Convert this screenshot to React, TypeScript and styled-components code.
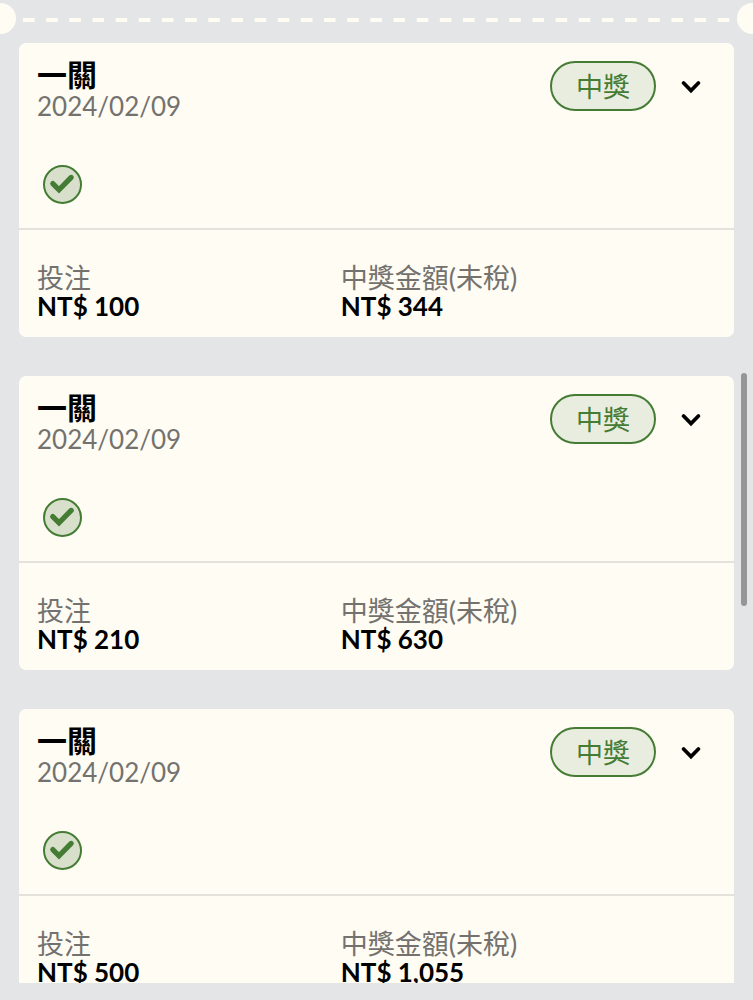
import React from 'react';
import styled, { createGlobalStyle } from 'styled-components';

const colors = {
  page: '#e3e5e7',
  paper: '#fffcf4',
  rule: '#e5e2dc',
  ink: '#000000',
  muted: '#73726e',
  green: '#457c34',
  greenTint: '#e9ede0',
  greenFill: '#d8e0cc',
};

const GlobalStyle = createGlobalStyle`
  *, *::before, *::after { box-sizing: border-box; }
  body {
    margin: 0;
    background: ${colors.page};
    color: ${colors.ink};
    font-family: Lato, "Noto Sans CJK TC", sans-serif;
    font-size: 27px;
  }
`;

const Screen = styled.main`
  position: relative;
  display: flex;
  flex-direction: column;
  height: 100vh;
  padding: 3px 0 17px;
  overflow: hidden;
`;

const Perforation = styled.div`
  display: flex;
  flex: none;
  align-items: center;
  height: 31px;
`;

const Notch = styled.span<{ $side: 'left' | 'right' }>`
  flex: none;
  width: 16px;
  height: 31px;
  background: ${colors.paper};
  border-radius: ${(p) => (p.$side === 'left' ? '0 16px 16px 0' : '16px 0 0 16px')};
`;

const Dashes = styled.span`
  flex: 1;
  height: 4px;
  margin: 3px -4px 0 7px;
  background-image: linear-gradient(to right, ${colors.paper} 52%, transparent 52%);
  background-size: 23px 4px;
  background-repeat: round no-repeat;
`;

const BetList = styled.ul`
  display: flex;
  flex: 1;
  flex-direction: column;
  gap: 39px;
  min-height: 0;
  margin: 0;
  padding: 9px 19px 0;
  overflow: hidden;
  list-style: none;
`;

const Card = styled.li`
  flex: none;
  background: ${colors.paper};
  border-radius: 7px;
`;

const CardTop = styled.div`
  padding: 16px 18px 24px;
  border-bottom: 2px solid ${colors.rule};
`;

const CardHeader = styled.header`
  display: flex;
  align-items: flex-start;
`;

const Heading = styled.div`
  flex: 1;
`;

const Title = styled.h2`
  margin: 0;
  font-size: 30px;
  font-weight: 700;
  line-height: 30px;
`;

const BetDate = styled.time`
  display: block;
  color: ${colors.muted};
  font-size: 26px;
  line-height: 34px;
`;

const StatusPill = styled.span`
  display: flex;
  align-items: center;
  justify-content: center;
  width: 106px;
  height: 50px;
  margin-top: 2px;
  padding-bottom: 2px;
  color: ${colors.green};
  background: ${colors.greenTint};
  border: 2px solid ${colors.green};
  border-radius: 25px;
`;

const ExpandButton = styled.button`
  display: flex;
  align-items: center;
  justify-content: center;
  width: 36px;
  height: 50px;
  margin: 2px 7px 0 17px;
  padding: 0;
  color: ${colors.ink};
  background: none;
  border: 0;
  cursor: pointer;
`;

const ResultMark = styled.svg`
  display: block;
  width: 39px;
  height: 39px;
  margin: 42px 0 0 6px;
`;

const Amounts = styled.dl`
  display: grid;
  grid-template-columns: 17fr 21fr;
  margin: 0;
  padding: 34px 18px 17px;
  line-height: 28px;
`;

const AmountLabel = styled.dt`
  color: ${colors.muted};
`;

const AmountValue = styled.dd`
  margin: 0;
  font-size: 26px;
  font-weight: 700;
`;

const ScrollThumb = styled.div`
  position: absolute;
  top: 373px;
  right: 6px;
  width: 6px;
  height: 233px;
  background: #949697;
  border-radius: 3px;
`;

interface Bet {
  id: number;
  title: string;
  date: string;
  status: string;
  stake: string;
  payout: string;
}

const bets: Bet[] = [
  { id: 1, title: '一關', date: '2024/02/09', status: '中獎', stake: '100', payout: '344' },
  { id: 2, title: '一關', date: '2024/02/09', status: '中獎', stake: '210', payout: '630' },
  { id: 3, title: '一關', date: '2024/02/09', status: '中獎', stake: '500', payout: '1,055' },
];

function BetCard({ bet }: { bet: Bet }) {
  return (
    <Card>
      <CardTop>
        <CardHeader>
          <Heading>
            <Title>{bet.title}</Title>
            <BetDate>{bet.date}</BetDate>
          </Heading>
          <StatusPill>{bet.status}</StatusPill>
          <ExpandButton type="button" aria-label="展開" aria-expanded={false}>
            <svg width="20" height="16" viewBox="0 0 20 16" fill="none" aria-hidden="true">
              <path
                d="M2.6 5 10 12.6 17.4 5"
                stroke="currentColor"
                strokeWidth="3.7"
                strokeLinecap="round"
              />
            </svg>
          </ExpandButton>
        </CardHeader>
        <ResultMark viewBox="0 0 39 39" fill="none" aria-hidden="true">
          <circle cx="19.5" cy="19.5" r="18.5" fill={colors.greenFill} stroke={colors.green} strokeWidth="2" />
          <path d="M9.8 18.6 16 24.9 28.2 12.4" stroke={colors.green} strokeWidth="5.2" strokeLinecap="round" />
        </ResultMark>
      </CardTop>
      <Amounts>
        <div>
          <AmountLabel>投注</AmountLabel>
          <AmountValue>NT$ {bet.stake}</AmountValue>
        </div>
        <div>
          <AmountLabel>中獎金額(未稅)</AmountLabel>
          <AmountValue>NT$ {bet.payout}</AmountValue>
        </div>
      </Amounts>
    </Card>
  );
}

export default function App() {
  return (
    <>
      <GlobalStyle />
      <Screen>
        <Perforation>
          <Notch $side="left" />
          <Dashes />
          <Notch $side="right" />
        </Perforation>
        <BetList>
          {bets.map((bet) => (
            <BetCard key={bet.id} bet={bet} />
          ))}
        </BetList>
        <ScrollThumb />
      </Screen>
    </>
  );
}
